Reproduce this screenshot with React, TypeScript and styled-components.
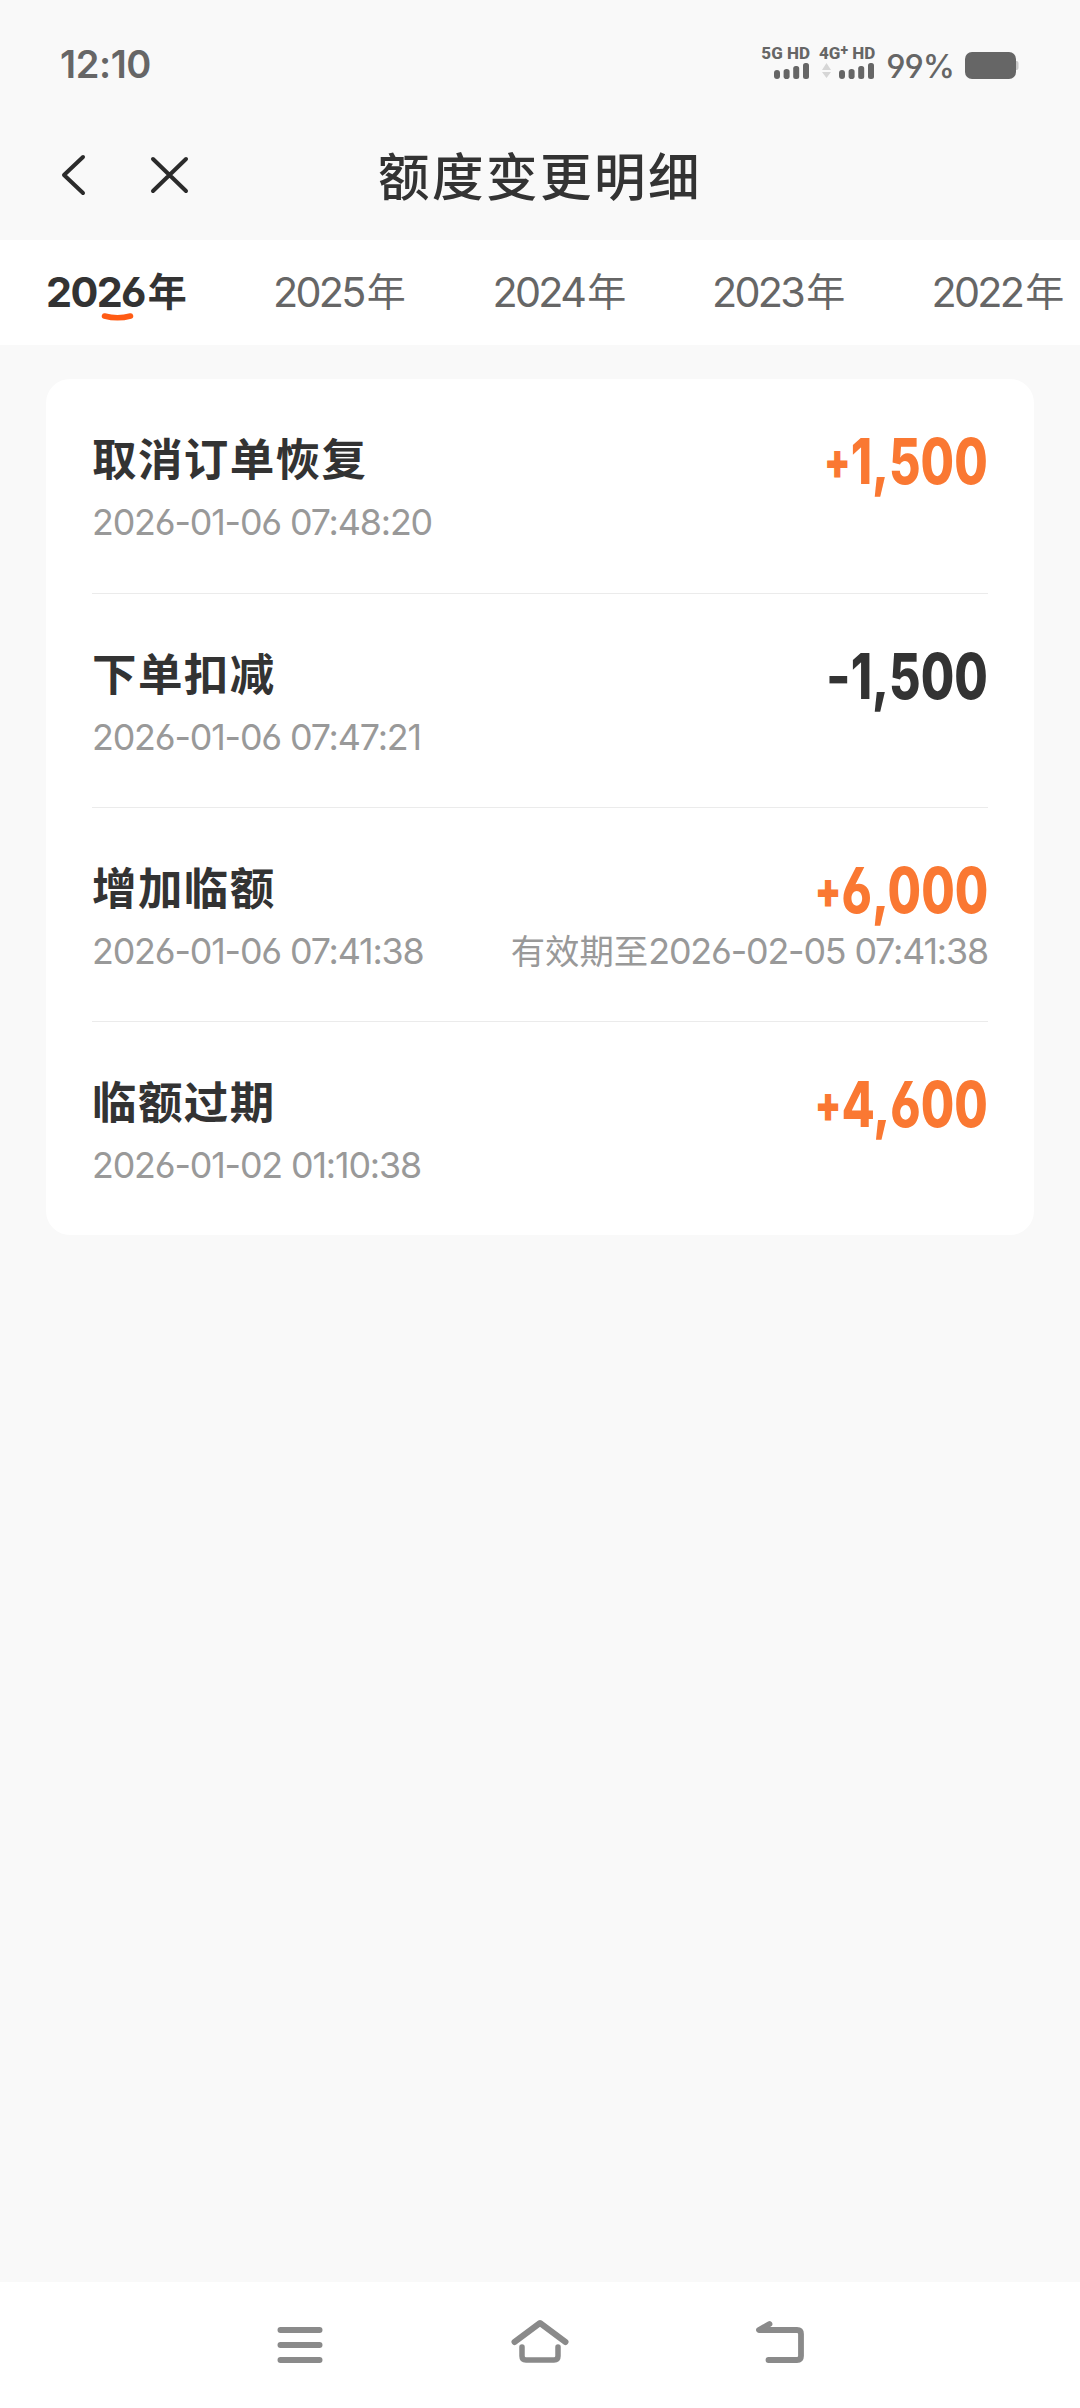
import React from 'react';
import styled, { createGlobalStyle } from 'styled-components';

const GlobalStyle = createGlobalStyle`
  * { box-sizing: border-box; }
  body {
    margin: 0;
    background: #f9f9f9;
    font-family: Inter, "Noto Sans CJK SC", sans-serif;
    font-feature-settings: "cv03", "cv04";
    color: #333;
  }
`;

const Screen = styled.div`
  display: flex;
  flex-direction: column;
  width: 1080px;
  height: 2408px;
  overflow: hidden;
  background: #f9f9f9;
  white-space: nowrap;
`;

const StatusBar = styled.div`
  display: flex;
  justify-content: space-between;
  align-items: flex-start;
  height: 104px;
  padding: 42px 60px 0 60px;
  color: #666;
`;

const Clock = styled.div`
  font-size: 38px;
  line-height: 44px;
  font-weight: 600;
  letter-spacing: -0.4px;
`;

const StatusRight = styled.div`
  display: flex;
`;

const Sim = styled.div<{ $gap: number }>`
  display: flex;
  flex-direction: column;
  align-items: flex-end;
  margin-right: ${(p) => p.$gap}px;
`;

const SimLabel = styled.div`
  height: 19px;
  font: 800 17px/22px Roboto, sans-serif;
`;

const Plus = styled.sup`
  font-size: 14px;
  line-height: 0;
  vertical-align: 4px;
`;

const Battery = styled.svg`
  margin: 10px 0 0 11px;
`;

const Percent = styled.div`
  font-size: 32.5px;
  line-height: 50px;
  font-weight: 500;
  letter-spacing: -1px;
`;

const Header = styled.header`
  display: grid;
  grid-template-columns: 200px 1fr 200px;
  align-items: start;
  height: 136px;
`;

const HeaderActions = styled.div`
  display: flex;
  gap: 62px;
  padding: 49px 0 0 60px;
`;

const Title = styled.h1`
  margin: 0;
  padding-top: 40px;
  text-align: center;
  font: 500 51.5px/60px "Noto Sans CJK SC", sans-serif;
  letter-spacing: 2.5px;
`;

const Tabs = styled.nav`
  display: flex;
  height: 105px;
  padding-left: 46px;
  background: #fff;
  overflow: hidden;
`;

const Tab = styled.div<{ $active?: boolean }>`
  display: flex;
  flex: none;
  align-items: baseline;
  position: relative;
  width: ${(p) => (p.$active ? 227 : 219.5)}px;
  padding-top: 23px;
  line-height: 54px;
  font-size: 41.3px;
  letter-spacing: ${(p) => (p.$active ? -1.6 : -2.7)}px;
  font-weight: ${(p) => (p.$active ? 700 : 400)};
  color: ${(p) => (p.$active ? '#333' : '#666')};
`;

const YearUnit = styled.span<{ $active?: boolean }>`
  margin-left: 3px;
  transform: translateY(-1.5px);
  font: ${(p) => (p.$active ? 700 : 400)} 39px/54px "Noto Sans CJK SC", sans-serif;
`;

const Smile = styled.svg`
  position: absolute;
  left: 55px;
  top: 72px;
`;

const Card = styled.main`
  display: flex;
  flex-direction: column;
  margin: 34px 46px 0;
  padding: 0 46px;
  height: 856px;
  border-radius: 24px;
  background: #fff;
`;

const Entry = styled.section`
  display: flex;
  flex-direction: column;
  height: 214px;
  padding-top: 51px;
  & + & {
    border-top: 1px solid #ebebeb;
  }
`;

const Line = styled.div<{ $height: number }>`
  display: flex;
  justify-content: space-between;
  height: ${(p) => p.$height}px;
`;

const EntryName = styled.div`
  font: 700 44.5px/54px "Noto Sans CJK SC", sans-serif;
  letter-spacing: 1.4px;
`;

const Amount = styled.div<{ $positive: boolean }>`
  display: flex;
  transform: scaleX(0.77);
  transform-origin: right;
  font-size: 63px;
  line-height: 62px;
  font-weight: 800;
  color: ${(p) => (p.$positive ? '#fa7832' : '#333')};
`;

const Sign = styled.span<{ $wide: boolean }>`
  font-size: 50px;
  font-weight: 900;
  transform: ${(p) => (p.$wide ? 'scaleX(1.35)' : 'none')};
  transform-origin: right;
`;

const Stamp = styled.div`
  font-size: 35.8px;
  line-height: 50px;
  letter-spacing: -1.15px;
  color: #999;
`;

const StampLabel = styled.span`
  font: 400 34.4px/1 "Noto Sans CJK SC", sans-serif;
  letter-spacing: 0;
`;

const NavBar = styled.footer`
  display: flex;
  justify-content: center;
  gap: 180px;
  height: 126px;
  margin-top: auto;
  padding-top: 33px;
  background: #fff;
`;

const NavIcon = styled.svg`
  width: 60px;
  height: 60px;
  fill: none;
  stroke: #8a8a8a;
  stroke-width: 6;
  stroke-linecap: round;
  stroke-linejoin: round;
`;

const Signal = ({ arrows }: { arrows?: boolean }) => (
  <svg width="54" height="19" viewBox="-4 0 54 19">
    {arrows && <path d="M-3 9l4.500-7 4.500 7zM-3 11h9l-4.500 6z" fill="#d6d6d6" />}
    <g fill="#666">
      <rect x="14" y="9" width="6" height="9" rx="3" />
      <rect x="23.600" y="8" width="6" height="10" rx="2.800" />
      <rect x="33.200" y="5" width="6" height="13" rx="2.500" />
      <rect x="43" y="2" width="6" height="16" rx="2.500" />
    </g>
  </svg>
);

const years = ['2026', '2025', '2024', '2023', '2022'];

const entries = [
  { name: '取消订单恢复', sign: '+', amount: '1,500', time: '2026-01-06 07:48:20' },
  { name: '下单扣减', sign: '-', amount: '1,500', time: '2026-01-06 07:47:21' },
  { name: '增加临额', sign: '+', amount: '6,000', time: '2026-01-06 07:41:38', until: '2026-02-05 07:41:38' },
  { name: '临额过期', sign: '+', amount: '4,600', time: '2026-01-02 01:10:38' },
];

export default function App() {
  return (
    <>
      <GlobalStyle />
      <Screen>
        <StatusBar>
          <Clock>12:10</Clock>
          <StatusRight>
            <Sim $gap={9}>
              <SimLabel>5G HD</SimLabel>
              <Signal />
            </Sim>
            <Sim $gap={11}>
              <SimLabel>
                4G<Plus>+</Plus> HD
              </SimLabel>
              <Signal arrows />
            </Sim>
            <Percent>99%</Percent>
            <Battery width="55" height="27" viewBox="0 0 55 27">
              <path d="M50 9h1.500q2 0 2 2v5q0 2-2 2H50z" fill="#c8c8c8" />
              <rect width="51" height="27" rx="7" fill="#666" />
            </Battery>
          </StatusRight>
        </StatusBar>
        <Header>
          <HeaderActions>
            <svg width="28" height="44" viewBox="0 0 28 44" fill="none" stroke="#2b2b2b" strokeWidth="4" strokeLinecap="round" strokeLinejoin="round">
              <path d="M23 4L4 22l19 18" />
            </svg>
            <svg width="40" height="44" viewBox="0 0 40 44" fill="none" stroke="#2b2b2b" strokeWidth="4" strokeLinecap="round">
              <path d="M3 6l33 32M36 6L3 38" />
            </svg>
          </HeaderActions>
          <Title>额度变更明细</Title>
        </Header>
        <Tabs>
          {years.map((y, i) => (
            <Tab key={y} $active={i === 0}>
              {y}
              <YearUnit $active={i === 0}>年</YearUnit>
              {i === 0 && (
                <Smile width="33" height="12" viewBox="0 0 33 12">
                  <path d="M3.500 4Q16.500 7.500 29.500 4" fill="none" stroke="#ff5b14" strokeWidth="5.500" strokeLinecap="round" />
                </Smile>
              )}
            </Tab>
          ))}
        </Tabs>
        <Card>
          {entries.map((e) => (
            <Entry key={e.time}>
              <Line $height={67}>
                <EntryName>{e.name}</EntryName>
                <Amount $positive={e.sign === '+'}>
                  <Sign $wide={e.sign === '-'}>{e.sign}</Sign>
                  {e.amount}
                </Amount>
              </Line>
              <Line $height={50}>
                <Stamp>{e.time}</Stamp>
                {e.until && (
                  <Stamp>
                    <StampLabel>有效期至</StampLabel>
                    {e.until}
                  </Stamp>
                )}
              </Line>
            </Entry>
          ))}
        </Card>
        <NavBar>
          <NavIcon viewBox="0 0 60 60">
            <path d="M10.500 15h39M10.500 30h39M10.500 45h39" />
          </NavIcon>
          <NavIcon viewBox="0 0 60 60">
            <path d="M4.500 27L30 8l25.500 19" />
            <path d="M12 32v9q0 4 4 4h28q4 0 4-4V32" strokeWidth="5.500" />
          </NavIcon>
          <NavIcon viewBox="0 0 60 60">
            <path d="M19.500 9L9 15h38q4 0 4 4v22q0 4-4 4H18.500" strokeWidth="5.800" />
          </NavIcon>
        </NavBar>
      </Screen>
    </>
  );
}
